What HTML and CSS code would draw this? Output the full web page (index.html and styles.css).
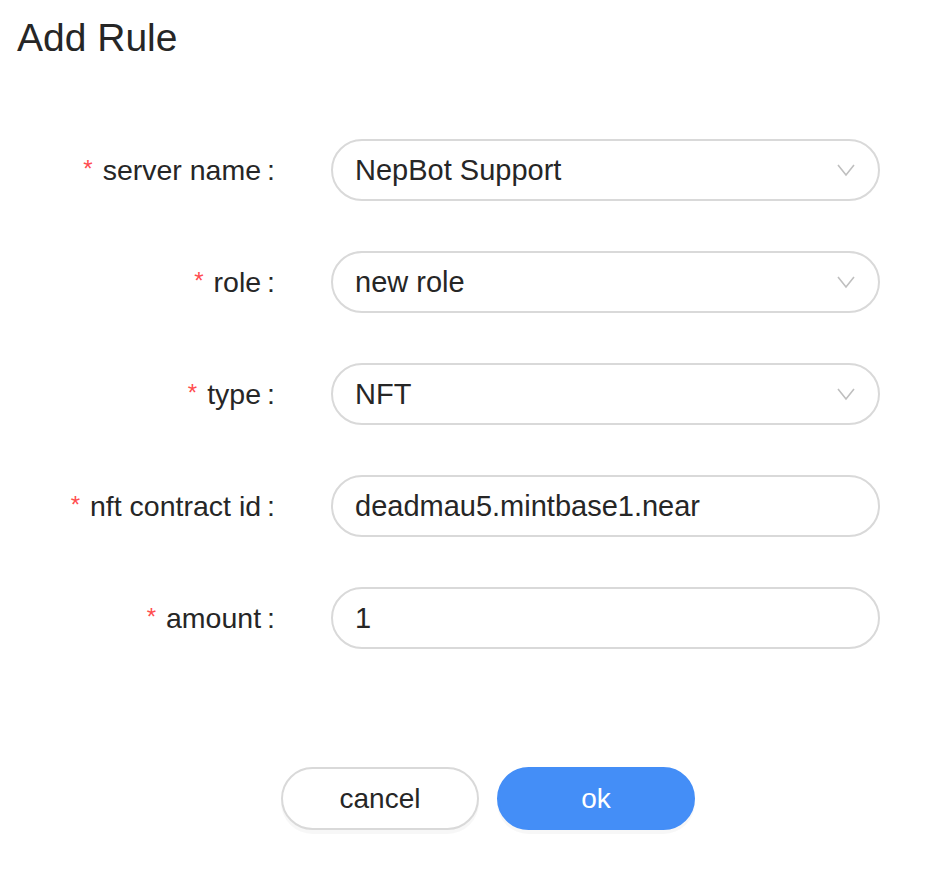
FILE: index.html
```html
<!DOCTYPE html>
<html>
<head>
<meta charset="utf-8">
<link rel="stylesheet" href="styles.css">
</head>
<body>
<div class="modal">
  <h1 class="title">Add Rule</h1>
  <form class="form">
    <div class="row">
      <label class="label"><span class="req">*</span>server name<span class="colon">:</span></label>
      <div class="field select"><span class="value">NepBot Support</span>
        <svg class="chev" width="20" height="14" viewBox="0 0 20 14"><path d="M2 2 L10 12 L18 2" fill="none" stroke="#bfbfbf" stroke-width="1.6"/></svg>
      </div>
    </div>
    <div class="row">
      <label class="label"><span class="req">*</span>role<span class="colon">:</span></label>
      <div class="field select"><span class="value">new role</span>
        <svg class="chev" width="20" height="14" viewBox="0 0 20 14"><path d="M2 2 L10 12 L18 2" fill="none" stroke="#bfbfbf" stroke-width="1.6"/></svg>
      </div>
    </div>
    <div class="row">
      <label class="label"><span class="req">*</span>type<span class="colon">:</span></label>
      <div class="field select"><span class="value">NFT</span>
        <svg class="chev" width="20" height="14" viewBox="0 0 20 14"><path d="M2 2 L10 12 L18 2" fill="none" stroke="#bfbfbf" stroke-width="1.6"/></svg>
      </div>
    </div>
    <div class="row">
      <label class="label"><span class="req">*</span>nft contract id<span class="colon">:</span></label>
      <div class="field"><span class="value">deadmau5.mintbase1.near</span></div>
    </div>
    <div class="row">
      <label class="label"><span class="req">*</span>amount<span class="colon">:</span></label>
      <div class="field"><span class="value">1</span></div>
    </div>
  </form>
  <div class="actions">
    <button class="btn" type="button">cancel</button>
    <button class="btn primary" type="button">ok</button>
  </div>
</div>
</body>
</html>
```
FILE: styles.css
```css
html, body {
  margin: 0;
  padding: 0;
  background: #ffffff;
}
body {
  font-family: "Liberation Sans", Arial, sans-serif;
  color: #262626;
}
.modal {
  width: 938px;
  height: 884px;
  box-sizing: border-box;
  padding: 14px 0 0 0;
}
.title {
  margin: 0 0 0 17px;
  font-size: 39px;
  font-weight: 400;
  line-height: 48px;
  color: #262626;
}
.form {
  margin-top: 77px;
  display: flex;
  flex-direction: column;
  gap: 50px;
}
.row {
  display: flex;
  align-items: center;
  height: 62px;
}
.label {
  width: 275px;
  text-align: right;
  font-size: 28.5px;
  color: #262626;
  white-space: nowrap;
}
.req {
  color: #ff4d4f;
  font-size: 24px;
  margin-right: 10px;
  position: relative;
  top: -3px;
}
.colon {
  margin-left: 6px;
}
.field {
  margin-left: 56px;
  width: 549px;
  height: 62px;
  box-sizing: border-box;
  border: 2px solid #d9d9d9;
  border-radius: 31px;
  display: flex;
  align-items: center;
  padding: 0 22px;
  font-size: 29px;
  color: #262626;
}
.field .value {
  flex: 1;
}
.chev {
  display: block;
}
.actions {
  margin-top: 118px;
  display: flex;
  gap: 18px;
  padding-left: 281px;
}
.btn {
  width: 198px;
  height: 63px;
  border-radius: 32px;
  border: 2px solid #d9d9d9;
  background: #ffffff;
  font-family: "Liberation Sans", Arial, sans-serif;
  font-size: 28px;
  color: #262626;
  box-shadow: 0 4px 0 rgba(0, 0, 0, 0.03);
  padding: 0;
}
.btn.primary {
  background: #448ef7;
  border-color: #448ef7;
  color: #ffffff;
}
```
